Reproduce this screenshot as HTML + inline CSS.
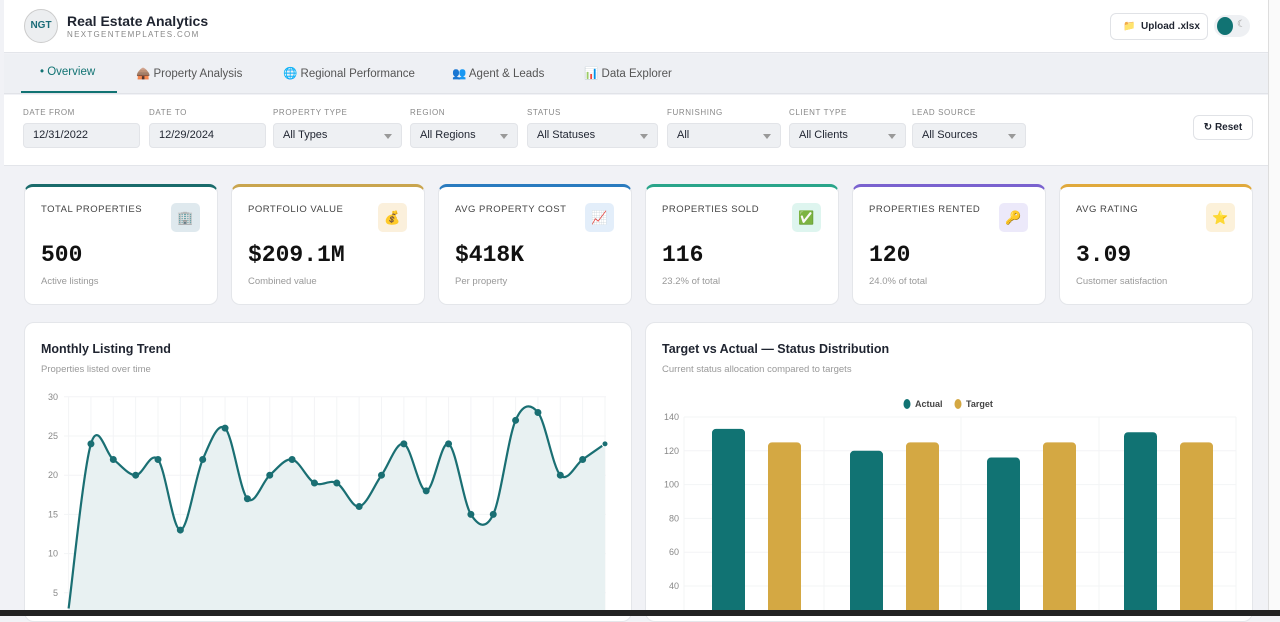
<!DOCTYPE html>
<html><head><meta charset="utf-8"><style>
*{box-sizing:border-box;margin:0;padding:0}
body{width:1280px;height:616px;overflow:hidden;background:#f1f2f6;font-family:"Liberation Sans",sans-serif;color:#1f2430;position:relative}
.hdr{position:absolute;left:4px;top:0;width:1264px;height:53px;background:#fff;border-bottom:1px solid #e3e5ea}
.logo{position:absolute;left:20px;top:9px;width:34px;height:34px;border-radius:50%;background:#eceef0;border:1px solid #ccc;font-size:10px;font-weight:bold;color:#1a6c78;text-align:center;line-height:32px}
.t1{position:absolute;left:63px;top:13px;font-size:14px;font-weight:bold}
.t2{position:absolute;left:63px;top:30px;font-size:8px;letter-spacing:1.3px;color:#888}
.up{position:absolute;left:1106px;top:13px;width:98px;height:27px;border:1px solid #e0e2e6;border-radius:6px;font-size:10px;font-weight:bold;line-height:25px;padding-left:30px}
.up span{position:absolute;left:12px;top:0;font-size:10px}
.tog{position:absolute;left:1210px;top:15px;width:36px;height:22px;border-radius:11px;background:#eef0f3}
.tog:before{content:"";position:absolute;left:3px;top:2px;width:16px;height:18px;border-radius:50%;background:#117373}
.tog:after{content:"☾";position:absolute;left:23px;top:4px;font-size:10px;color:#999}
.tabs{position:absolute;left:4px;top:54px;width:1264px;height:40px;background:#eef0f4;border-bottom:1px solid #e1e3e8}
.tab{position:absolute;top:12px;font-size:11.5px;color:#555}
.tab.a{color:#117373}
.uline{position:absolute;left:17px;top:37px;width:96px;height:2px;background:#117373}
.flt{position:absolute;left:4px;top:95px;width:1264px;height:71px;background:#fff;border-bottom:1px solid #e3e5ea}
.f{position:absolute;top:13px}
.f label{display:block;font-size:8px;letter-spacing:.6px;color:#888;margin-bottom:6px}
.f div{height:25px;background:#eef0f3;border:1px solid #e2e4e8;border-radius:4px;font-size:11px;line-height:23px;padding-left:9px;position:relative}
.f div.s:after{content:"";position:absolute;right:9px;top:10px;border:4px solid transparent;border-top:5px solid #999}
.rst{position:absolute;left:1189px;top:20px;width:60px;height:25px;border:1px solid #e0e2e6;border-radius:6px;font-size:10px;font-weight:bold;line-height:23px;text-align:center}
.card{position:absolute;top:184px;width:194px;height:121px;background:#fff;border-radius:9px;border:1px solid #e4e6ea;border-top:3px solid}
.card .l{position:absolute;left:16px;top:17px;font-size:9.5px;letter-spacing:.5px;color:#444}
.card .ic{position:absolute;right:17px;top:16px;width:29px;height:29px;border-radius:5px;text-align:center;line-height:29px;font-size:13px}
.card .v{position:absolute;left:16px;top:55px;font-family:"Liberation Mono",monospace;font-weight:bold;font-size:23px;color:#111}
.card .s{position:absolute;left:16px;top:89px;font-size:9.5px;color:#999}
.pan{position:absolute;top:322px;width:608px;height:300px;background:#fff;border-radius:10px;border:1px solid #e4e6ea}
.pan h3{position:absolute;left:16px;top:19px;font-size:12.5px}
.pan p{position:absolute;left:16px;top:41px;font-size:9.5px;color:#999}
.bot{position:absolute;left:0;top:610px;width:1280px;height:6px;background:#222}
.rs{position:absolute;left:1268px;top:0;width:12px;height:610px;background:#fafafa;border-left:1px solid #ddd}
svg{position:absolute;left:0;top:0}
</style></head><body>
<div class="hdr"><div class="logo">NGT</div><div class="t1">Real Estate Analytics</div><div class="t2">NEXTGENTEMPLATES.COM</div>
<div class="up"><span>📁</span>Upload .xlsx</div><div class="tog"></div></div>
<div class="tabs">
<span class="tab a" style="left:36px">• Overview</span>
<span class="tab" style="left:132px">🛖 Property Analysis</span>
<span class="tab" style="left:279px">🌐 Regional Performance</span>
<span class="tab" style="left:448px">👥 Agent &amp; Leads</span>
<span class="tab" style="left:580px">📊 Data Explorer</span>
<div class="uline"></div></div>
<div class="flt">
<div class="f" style="left:19px;width:117px"><label>DATE FROM</label><div>12/31/2022</div></div>
<div class="f" style="left:145px;width:117px"><label>DATE TO</label><div>12/29/2024</div></div>
<div class="f" style="left:269px;width:129px"><label>PROPERTY TYPE</label><div class="s">All Types</div></div>
<div class="f" style="left:406px;width:108px"><label>REGION</label><div class="s">All Regions</div></div>
<div class="f" style="left:523px;width:131px"><label>STATUS</label><div class="s">All Statuses</div></div>
<div class="f" style="left:663px;width:114px"><label>FURNISHING</label><div class="s">All</div></div>
<div class="f" style="left:785px;width:117px"><label>CLIENT TYPE</label><div class="s">All Clients</div></div>
<div class="f" style="left:908px;width:114px"><label>LEAD SOURCE</label><div class="s">All Sources</div></div>
<div class="rst">↻ Reset</div></div>
<div class="card" style="left:24px;border-top-color:#1a6b6b"><div class="l">TOTAL PROPERTIES</div><div class="ic" style="background:#dfe9ee">🏢</div><div class="v">500</div><div class="s">Active listings</div></div>
<div class="card" style="left:231px;border-top-color:#c9a54e"><div class="l">PORTFOLIO VALUE</div><div class="ic" style="background:#fbf0dc">💰</div><div class="v">$209.1M</div><div class="s">Combined value</div></div>
<div class="card" style="left:438px;border-top-color:#2a7bbf"><div class="l">AVG PROPERTY COST</div><div class="ic" style="background:#e3eefa">📈</div><div class="v">$418K</div><div class="s">Per property</div></div>
<div class="card" style="left:645px;border-top-color:#2aa58a"><div class="l">PROPERTIES SOLD</div><div class="ic" style="background:#def5ef">✅</div><div class="v">116</div><div class="s">23.2% of total</div></div>
<div class="card" style="left:852px;border-top-color:#7a62cf"><div class="l">PROPERTIES RENTED</div><div class="ic" style="background:#ece9fa">🔑</div><div class="v">120</div><div class="s">24.0% of total</div></div>
<div class="card" style="left:1059px;border-top-color:#e0a93c"><div class="l">AVG RATING</div><div class="ic" style="background:#fcf1da">⭐</div><div class="v">3.09</div><div class="s">Customer satisfaction</div></div>
<div class="pan" style="left:24px"><h3>Monthly Listing Trend</h3><p>Properties listed over time</p></div>
<div class="pan" style="left:645px"><h3>Target vs Actual — Status Distribution</h3><p>Current status allocation compared to targets</p></div>
<svg width="1280" height="616" id="sv" font-family="Liberation Sans" font-size="9" fill="#888">
<g stroke="#f3f4f6" stroke-width="1" id="grid"></g>
<g id="bars"></g>
<ellipse cx="907" cy="404" rx="3.5" ry="5" fill="#117373"/><text x="915" y="407" fill="#444" font-weight="bold">Actual</text>
<ellipse cx="958" cy="404" rx="3.5" ry="5" fill="#d4a843"/><text x="966" y="407" fill="#444" font-weight="bold">Target</text>
</svg>
<div class="rs"></div>
<div class="bot"></div>
<script>
var sv=document.getElementById('sv'),NS='http://www.w3.org/2000/svg';
function el(t,a,p){var e=document.createElementNS(NS,t);for(var k in a)e.setAttribute(k,a[k]);(p||sv).appendChild(e);return e}
var g=document.getElementById('grid');
for(var v=5;v<=30;v+=5){var y=632-v*7.84;el('line',{x1:64,x2:606,y1:y,y2:y},g);var t=el('text',{x:58,y:y+3,'text-anchor':'end'});t.textContent=v}
var vals=[3,24,22,20,22,13,22,26,17,20,22,19,19,16,20,24,18,24,15,15,27,28,20,22,24];
var P=vals.map(function(v,i){return [68.6+22.35*i,632-v*7.84]});
P.forEach(function(p){el('line',{x1:p[0],x2:p[0],y1:397,y2:610},g)});
var d='M'+P[0][0]+','+P[0][1];
for(var i=0;i<P.length-1;i++){var p0=P[i-1]||P[i],p1=P[i],p2=P[i+1],p3=P[i+2]||p2;
d+=' C'+(p1[0]+(p2[0]-p0[0])/6)+','+(p1[1]+(p2[1]-p0[1])/6)+' '+(p2[0]-(p3[0]-p1[0])/6)+','+(p2[1]-(p3[1]-p1[1])/6)+' '+p2[0]+','+p2[1];}
el('path',{d:d+' L605,610 L68.6,610 Z',fill:'#e8f1f2',stroke:'none'});
el('path',{d:d,fill:'none',stroke:'#1a6f73','stroke-width':2.2});
P.forEach(function(p,i){if(i>0)el('circle',{cx:p[0],cy:p[1],r:3,fill:'#1a6f73',stroke:i==24?'#fff':'#1a6f73','stroke-width':1})});
for(var v=40;v<=140;v+=20){var y=417+(140-v)*1.69;el('line',{x1:684,x2:1236,y1:y,y2:y},g);var t=el('text',{x:679,y:y+3,'text-anchor':'end'});t.textContent=v}
[684,824,961,1099,1236].forEach(function(x){el('line',{x1:x,x2:x,y1:417,y2:610},g)});
var b=document.getElementById('bars'),act=[133,120,116,131],tx=[712,850,987,1124];
act.forEach(function(a,i){var y=417+(140-a)*1.69;el('rect',{x:tx[i],y:y,width:33,height:640-y,rx:4,fill:'#117373'},b);
var y2=417+15*1.69;el('rect',{x:tx[i]+56,y:y2,width:33,height:640-y2,rx:4,fill:'#d4a843'},b)});
</script>
</body></html>
